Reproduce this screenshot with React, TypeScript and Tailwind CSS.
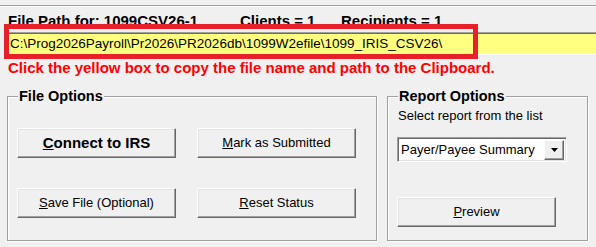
import React, { useState } from 'react';

const font = "font-['Liberation_Sans',Arial,sans-serif]";

// classic raised 3D button
const Btn: React.FC<{ children: React.ReactNode; className?: string }> = ({ children, className = '' }) => (
  <button
    type="button"
    className={`h-[30px] w-[159px] bg-[#f0f0f0] border border-t-white border-l-white border-r-[#696969] border-b-[#696969] shadow-[inset_-1px_-1px_0_#a0a0a0,inset_1px_1px_0_#e3e3e3] text-black flex items-center justify-center ${className}`}
  >
    {children}
  </button>
);

const GroupBox: React.FC<{ label: string; className?: string; children: React.ReactNode }> = ({ label, className = '', children }) => (
  <div className={`relative h-[145px] border border-[#a0a0a0] shadow-[inset_1px_1px_0_#fff,1px_1px_0_#fff] ${className}`}>
    <span className="absolute left-[10px] top-[-9px] bg-[#f0f0f0] px-[1px] text-[14.5px] leading-[16px] font-bold text-black">
      {label}
    </span>
    {children}
  </div>
);

export default function App() {
  const [report, setReport] = useState('Payer/Payee Summary');
  const path = 'C:\\Prog2026Payroll\\Pr2026\\PR2026db\\1099W2efile\\1099_IRIS_CSV26\\';

  const copyPath = () => {
    try {
      navigator.clipboard?.writeText(path);
    } catch (e) {
      console.error('Clipboard error:', e);
    }
  };

  return (
    <div className={`relative w-[596px] h-[247px] bg-[#f0f0f0] overflow-hidden ${font}`}>
      <div className="mt-[5px] h-[2px] border-t border-t-[#a0a0a0] border-b border-b-white" />

      <div className="mt-[5px] pl-[8px] flex text-[15px] leading-[17px] font-bold text-black whitespace-nowrap">
        <span className="w-[232px]">File Path for: 1099CSV26-1</span>
        <span className="w-[101px]">Clients = 1</span>
        <span>Recipients = 1</span>
      </div>

      <div
        onClick={copyPath}
        className="mt-[3px] ml-[5px] h-[23px] border-t border-t-[#a0a0a0] border-b border-b-white shadow-[inset_0_1px_0_#696969] bg-[#ffff80] pl-[5px] pt-[2px] text-[13.5px] leading-[18px] text-black whitespace-nowrap cursor-pointer"
      >
        {path}
      </div>

      <div className="mt-[4px] pl-[8px] text-[15px] leading-[17px] font-bold text-[#ff0000] whitespace-nowrap">
        Click the yellow box to copy the file name and path to the Clipboard.
      </div>

      <div className="mt-[20px] flex">
        <GroupBox label="File Options" className="ml-[7px] w-[370px]">
          <div className="grid grid-cols-[159px_159px] gap-x-[21px] gap-y-[30px] pl-[9px] pt-[31px] text-[13px]">
            <Btn className="text-[15px] font-bold">
              <span><u>C</u>onnect to IRS</span>
            </Btn>
            <Btn><span><u>M</u>ark as Submitted</span></Btn>
            <Btn><span><u>S</u>ave File (Optional)</span></Btn>
            <Btn><span><u>R</u>eset Status</span></Btn>
          </div>
        </GroupBox>

        <GroupBox label="Report Options" className="ml-[10px] w-[201px]">
          <div className="pl-[10px] pt-[11px] text-[13px] leading-[15px] text-black">Select report from the list</div>
          <div className="ml-[9px] mt-[14px] w-[170px] h-[25px] border border-t-[#a0a0a0] border-l-[#a0a0a0] border-r-white border-b-white shadow-[inset_1px_1px_0_#696969,inset_-1px_-1px_0_#e3e3e3] bg-white flex items-center pl-[3px] pr-[2px]">
            <span className="flex-1 text-[13px] leading-[15px] text-black whitespace-nowrap">{report}</span>
            <button
              type="button"
              onClick={() => setReport(report)}
              className="w-[20px] h-[20px] bg-[#f0f0f0] border border-t-white border-l-white border-r-[#696969] border-b-[#696969] shadow-[inset_-1px_-1px_0_#a0a0a0] flex items-center justify-center"
            >
              <svg width="7" height="4" viewBox="0 0 7 4">
                <path d="M0 0h7L3.5 4z" fill="#000" />
              </svg>
            </button>
          </div>
          <Btn className="ml-[9px] mt-[35px] text-[13px]">
            <span><u>P</u>review</span>
          </Btn>
        </GroupBox>
      </div>

      {/* annotation box drawn over the path field */}
      <div className="absolute left-[4px] top-[24px] w-[474px] h-[35px] border-[5px] border-[#e8202a] pointer-events-none" />
    </div>
  );
}
